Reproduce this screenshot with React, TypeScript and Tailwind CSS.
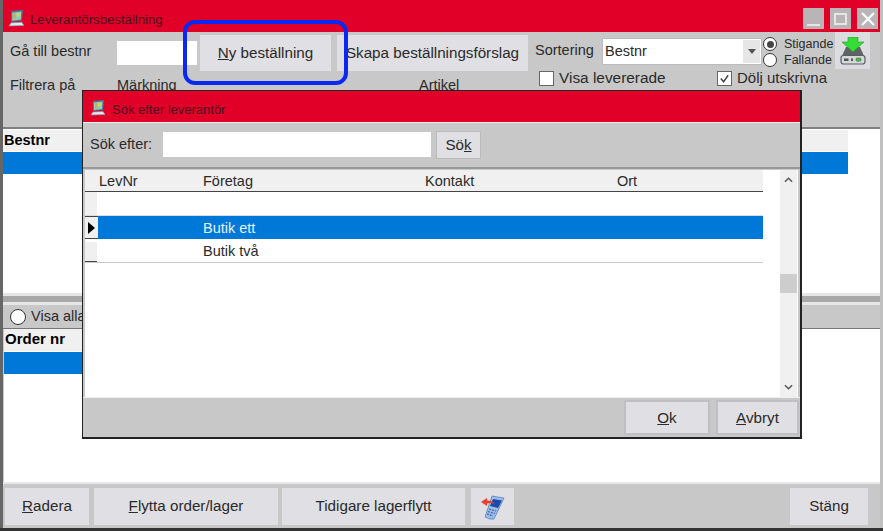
import React from 'react';

const font = "font-['Liberation_Sans',Arial,sans-serif]";

const AppIcon = ({ className }: { className: string }) => (
    <svg viewBox="0 0 16 16" className={className}>
        <path d="M3 1 L14 0 L13 10 L3 11 Z" fill="#3d7f9a" />
        <path d="M4 2.5 L12.5 1.5 L12 9 L4 10 Z" fill="#8fd0b0" />
        <path d="M5 3.5 h2.5 v5 h-2.5 Z" fill="#d9a36a" />
        <path d="M8 3 h3.5 v3 h-3.5 Z" fill="#c9d66a" />
        <path d="M3 12 L13 11.5 L15 14.5 L1 15 Z" fill="#dfe8ee" stroke="#7f9bb0" strokeWidth="0.6" />
    </svg>
);

const Btn = ({ className, children }: { className: string; children: React.ReactNode }) => (
    <div className={`flex items-center justify-center pt-[1px] bg-[#e0dfe3] text-[15.2px] text-[#2a2a2a] shrink-0 ${className}`}>
        {children}
    </div>
);

const Radio = ({ checked, className }: { checked?: boolean; className: string }) => (
    <div className={`flex items-center justify-center rounded-full bg-white border border-[#333] shrink-0 ${className}`}>
        {checked && <div className="w-[7px] h-[7px] rounded-full bg-[#444]" />}
    </div>
);

const Check = ({ checked }: { checked?: boolean }) => (
    <div className="flex items-center justify-center w-[15px] h-[15px] bg-white border border-[#666] shrink-0">
        {checked && (
            <svg viewBox="0 0 12 12" className="w-[11px] h-[11px]">
                <path d="M2 6 L5 9.5 L10 2.5" fill="none" stroke="#444" strokeWidth="1.6" />
            </svg>
        )}
    </div>
);

const WinBtn = ({ children }: { children: React.ReactNode }) => (
    <div className="flex items-center justify-center w-[21px] h-[21px] bg-[#b9b5b6]">{children}</div>
);

const DownloadIcon = () => (
    <svg viewBox="0 0 26 28" className="w-[26px] h-[28px]">
        <path d="M6 10 L20 10 L24 19 L2 19 Z" fill="#5f6366" />
        <rect x="1" y="18.5" width="24" height="8.5" rx="2.5" fill="#d6d8da" stroke="#5a5e61" strokeWidth="1.2" />
        <rect x="4" y="21.5" width="4.5" height="2.5" fill="#555" />
        <rect x="11" y="21.5" width="2" height="2.5" fill="#555" />
        <rect x="16" y="21" width="5" height="3.2" rx="1" fill="#3cc24a" stroke="#555" strokeWidth="0.5" />
        <path d="M8 0 H18 V5 H24 L13 15 L2 5 H8 Z" fill="#35dc35" stroke="#17a828" strokeWidth="0.6" />
    </svg>
);

const PhoneIcon = () => (
    <svg viewBox="0 0 26 28" className="w-[26px] h-[28px]">
        <path d="M12 3 L24 5 L14 26 Q10 27 5 24 Z" fill="#9dbde6" stroke="#4a78b4" strokeWidth="0.7" />
        <path d="M13 6 L22 7.5 L18 15 L10 13 Z" fill="#1c4aa8" />
        <path d="M9 16 L16 18 M8 18.5 L15 20.5 M7 21 L13 23" stroke="#3f6dab" strokeWidth="1.3" strokeDasharray="2 1" />
        <path d="M1 9 L7 5 L7 7.5 Q13 7.5 15 11 Q11 9.5 7 10.5 L7 13 Z" fill="#e8402a" />
    </svg>
);

const App: React.FC = () => {
    return (
        <div className={`relative w-[883px] h-[531px] overflow-hidden bg-[#c8c8c8] text-[#2a2a2a] ${font}`}>
            <div className="flex flex-col h-[528px] border-x-[3px] border-l-[#666] border-r-[#c0c0c0]">
                {/* Title bar */}
                <div className="flex items-center h-[32px] bg-[#e00028] pl-[5px] pr-[2px] shrink-0">
                    <AppIcon className="w-[17px] h-[17px] mt-[4px]" />
                    <span className="ml-[5px] mt-[7px] text-[13.2px] text-[#4a1020]">Leverantörsbeställning</span>
                    <div className="ml-auto flex gap-[6px] mt-[5px]">
                        <WinBtn>
                            <div className="w-[13px] h-[1.5px] bg-[#e6e6e6] mt-[13px]" />
                        </WinBtn>
                        <WinBtn>
                            <div className="w-[13px] h-[12px] border-2 border-[#e6e6e6]" />
                        </WinBtn>
                        <WinBtn>
                            <svg viewBox="0 0 14 14" className="w-[14px] h-[14px]">
                                <path d="M1 1 L13 13 M13 1 L1 13" stroke="#fff" strokeWidth="2.2" />
                            </svg>
                        </WinBtn>
                    </div>
                </div>

                {/* Toolbar */}
                <div className="relative h-[97px] shrink-0 border-b-2 border-b-[#808080]">
                    <div className="flex items-start h-[38px] pl-[7px]">
                        <span className="w-[107px] mt-[9px] text-[14.5px] shrink-0">Gå till bestnr</span>
                        <div className="w-[80px] h-[24px] mt-[9px] bg-white shrink-0" />
                        <Btn className="w-[131px] h-[36px] mt-[3px] ml-[3px]">
                            <span><u>N</u>y beställning</span>
                        </Btn>
                        <Btn className="w-[191px] h-[36px] mt-[3px] ml-[6px]">Skapa beställningsförslag</Btn>
                        <span className="w-[67px] ml-[7px] mt-[8px] text-[14.5px] shrink-0">Sortering</span>
                        <div className="flex items-center w-[160px] h-[27px] mt-[6px] bg-white border border-[#bbb] shrink-0">
                            <span className="ml-[2px] text-[14.5px]">Bestnr</span>
                            <div className="ml-auto flex items-center justify-center w-[17px] h-[23px] bg-[#e6e6e6] mr-[1px]">
                                <div className="w-0 h-0 border-x-[4px] border-x-transparent border-t-[5px] border-t-[#555]" />
                            </div>
                        </div>
                        <div className="flex flex-col w-[72px] ml-[1px] mt-[4px] shrink-0 text-[12.5px] leading-[16px]">
                            <div className="flex items-center gap-[7px]"><Radio checked className="w-[14px] h-[14px]" /><span>Stigande</span></div>
                            <div className="flex items-center gap-[7px]"><Radio className="w-[14px] h-[14px]" /><span>Fallande</span></div>
                        </div>
                        <div className="flex items-center justify-center w-[35px] h-[37px] bg-[#dcdbdf] shrink-0">
                            <DownloadIcon />
                        </div>
                    </div>
                    <div className="flex items-start h-[30px] pl-[7px]">
                        <span className="w-[107px] mt-[5px] text-[14.5px] shrink-0">Filtrera på</span>
                        <span className="w-[302px] mt-[5px] text-[14.5px] shrink-0">Märkning</span>
                        <span className="w-[120px] mt-[5px] text-[14.5px] shrink-0">Artikel</span>
                        <div className="flex items-center gap-[5px] w-[178px] shrink-0">
                            <Check /><span className="text-[15.4px] leading-[16px]">Visa levererade</span>
                        </div>
                        <div className="flex items-center gap-[5px] shrink-0">
                            <Check checked /><span className="text-[15px] leading-[16px]">Dölj utskrivna</span>
                        </div>
                    </div>
                </div>

                {/* Upper list */}
                <div className="flex flex-col h-[164px] pt-[1px] bg-white shrink-0">
                    <div className="w-[845px] h-[21px] bg-[#f0f0f0] text-[14.5px] font-bold text-black pl-[1px] leading-[20px]">Bestnr</div>
                    <div className="w-[845px] h-[22px] mt-[1px] bg-[#0078d7]" />
                </div>

                {/* Splitter */}
                <div className="h-[12px] shrink-0 border-y-[3px] border-y-[#e6e6e6] bg-[#a8a8a8]" />

                {/* Lower panel */}
                <div className="flex items-center h-[24px] pl-[7px] gap-[5px] shrink-0 border-b border-b-[#777]">
                    <Radio className="w-[16px] h-[16px]" />
                    <span className="text-[14.5px]">Visa alla</span>
                </div>
                <div className="flex-1 bg-white ml-[1px]">
                    <div className="w-[300px] h-[22px] bg-[#f0f0f0] text-[15px] font-bold text-black pl-[1px] leading-[20px]">Order nr</div>
                    <div className="w-[300px] h-[22px] mt-[1px] bg-[#0078d7]" />
                </div>

                {/* Bottom bar */}
                <div className="flex items-center h-[46px] pl-[2px] pr-[12px] shrink-0 border-t-2 border-t-[#e8e8e8]">
                    <Btn className="w-[84px] h-[37px]"><span><u>R</u>adera</span></Btn>
                    <Btn className="w-[184px] h-[37px] ml-[5px]"><span><u>F</u>lytta order/lager</span></Btn>
                    <Btn className="w-[183px] h-[37px] ml-[4px]">Tidigare lagerflytt</Btn>
                    <Btn className="w-[43px] h-[37px] ml-[6px]"><PhoneIcon /></Btn>
                    <Btn className="w-[78px] h-[37px] ml-auto">Stäng</Btn>
                </div>
            </div>
            <div className="h-[3px] bg-[#333]" />

            {/* Highlight around Ny beställning */}
            <div className="absolute left-[183px] top-[20px] w-[165px] h-[65px] rounded-[12px] border-4 border-[#0a28f0] z-10" />

            {/* Dialog */}
            <div className="absolute left-[82px] top-[90px] flex flex-col w-[720px] h-[349px] bg-[#c8c8c8] border border-[#222] border-r-2 border-b-2 z-20">
                <div className="flex items-center h-[32px] bg-[#e00028] pl-[7px] shrink-0 border-b border-b-[#eee]">
                    <AppIcon className="w-[16px] h-[16px] mt-[2px]" />
                    <span className="ml-[6px] mt-[6px] text-[13px] text-[#4a1020]">Sök efter leverantör</span>
                </div>
                <div className="flex items-center h-[46px] pb-[1px] pl-[7px] shrink-0 border-b-2 border-b-[#999]">
                    <span className="w-[73px] text-[14.5px] shrink-0">Sök efter:</span>
                    <div className="w-[268px] h-[25px] bg-white shrink-0" />
                    <Btn className="w-[45px] h-[28px] ml-[5px] border border-[#bbb]"><span>Sö<u>k</u></span></Btn>
                </div>
                <div className="flex flex-1 mx-[2px] mt-[1px] bg-white min-h-0">
                    <div className="w-[678px] shrink-0">
                        <div className="flex items-center h-[22px] pt-[2px] bg-[#f0f0f0] border-b border-b-[#444] text-[14.5px]">
                            <span className="w-[104px] ml-[14px]">LevNr</span>
                            <span className="w-[222px]">Företag</span>
                            <span className="w-[192px]">Kontakt</span>
                            <span>Ort</span>
                        </div>
                        <div className="flex h-[24px] border-b border-b-[#ddd]">
                            <div className="w-[12px] bg-[#f0f0f0]" />
                        </div>
                        <div className="flex items-center h-[23px]">
                            <div className="flex items-center justify-center w-[13px] h-full bg-[#f0f0f0] border-y border-y-[#444] shrink-0">
                                <div className="w-0 h-0 border-y-[6px] border-y-transparent border-l-[7px] border-l-black" />
                            </div>
                            <div className="flex-1 h-full bg-[#0078d7] pl-[105px] leading-[24px] text-[14.5px] text-[#e8f2ff]">Butik ett</div>
                        </div>
                        <div className="flex items-center h-[24px] pt-[3px] border-b border-b-[#ccc]">
                            <div className="w-[12px] h-full bg-[#f0f0f0] border-b border-b-[#444] shrink-0" />
                            <div className="pl-[106px] text-[14.5px]">Butik två</div>
                        </div>
                    </div>
                    <div className="flex flex-col items-center w-[17px] ml-[17px] bg-[#f0f0f0] shrink-0">
                        <svg viewBox="0 0 10 6" className="w-[9px] h-[6px] mt-[7px]"><path d="M1 5 L5 1 L9 5" fill="none" stroke="#555" strokeWidth="1.6" /></svg>
                        <div className="w-full h-[19px] bg-[#cdcdcd] mt-[91px]" />
                        <svg viewBox="0 0 10 6" className="w-[9px] h-[6px] mt-auto mb-[7px]"><path d="M1 1 L5 5 L9 1" fill="none" stroke="#555" strokeWidth="1.6" /></svg>
                    </div>
                </div>
                <div className="flex items-center justify-end h-[40px] shrink-0 pr-[1px] gap-[6px] border-t border-t-[#eee]">
                    <Btn className="w-[86px] h-[35px] border-2 border-[#c0c0c4]"><span><u>O</u>k</span></Btn>
                    <Btn className="w-[83px] h-[35px] border-2 border-[#c0c0c4]"><span><u>A</u>vbryt</span></Btn>
                </div>
            </div>
        </div>
    );
};

export default App;
